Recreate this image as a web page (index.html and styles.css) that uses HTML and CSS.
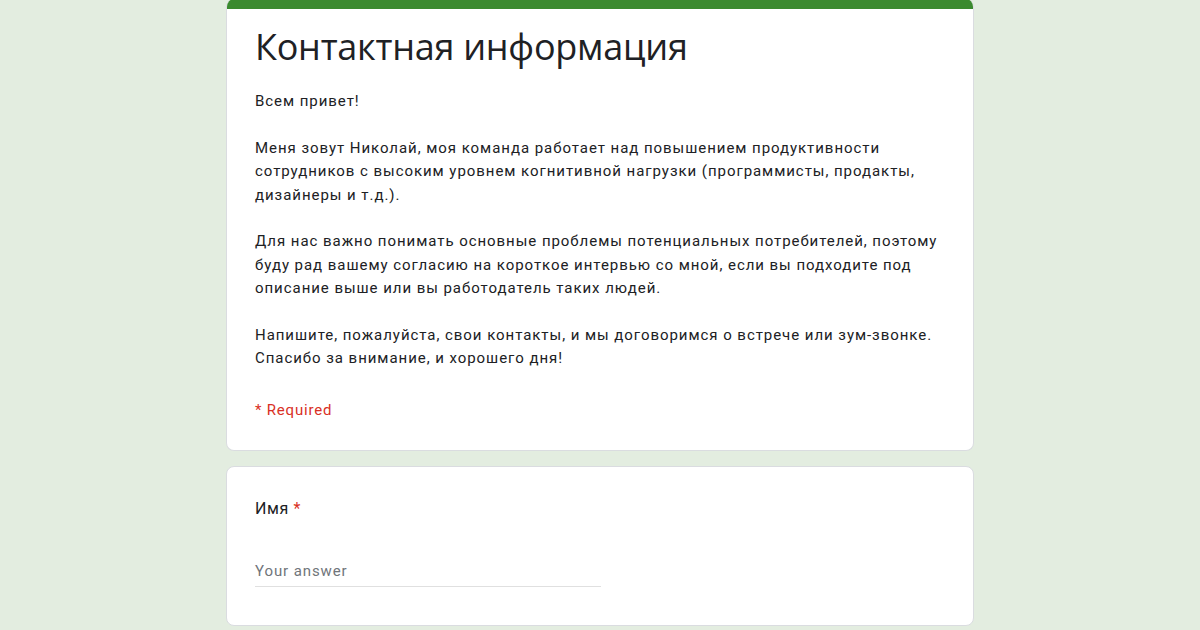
FILE: index.html
```html
<!DOCTYPE html>
<html lang="ru">
<head>
<meta charset="utf-8">
<title>Контактная информация</title>
<link rel="stylesheet" href="styles.css">
</head>
<body>
<div class="form">
  <div class="card header-card">
    <div class="accent"></div>
    <div class="header-body">
      <h1 class="title">Контактная информация</h1>
      <div class="desc">Всем привет!

Меня зовут Николай, моя команда работает над повышением продуктивности сотрудников с высоким уровнем когнитивной нагрузки (программисты, продакты, дизайнеры и т.д.).

Для нас важно понимать основные проблемы потенциальных потребителей, поэтому буду рад вашему согласию на короткое интервью со мной, если вы подходите под описание выше или вы работодатель таких людей.

Напишите, пожалуйста, свои контакты, и мы договоримся о встрече или зум-звонке. Спасибо за внимание, и хорошего дня!</div>
      <div class="required">* Required</div>
    </div>
  </div>
  <div class="card question-card">
    <div class="q-title">Имя <span class="star">*</span></div>
    <div class="answer">Your answer</div>
  </div>
</div>
</body>
</html>
```
FILE: styles.css
```css
html, body {
  margin: 0;
  padding: 0;
}
body {
  background: #e3ede0;
  font-family: Roboto, "Noto Sans", Arial, sans-serif;
  color: #202124;
  width: 1200px;
  height: 630px;
  overflow: hidden;
}
.form {
  width: 748px;
  margin: -1px 0 0 226px;
  display: flex;
  flex-direction: column;
  gap: 15px;
}
.card {
  background: #fff;
  border-radius: 8px;
  border: 1px solid #dadce0;
  box-sizing: border-box;
}
.header-card {
  overflow: hidden;
  border-top: none;
}
.accent {
  height: 10px;
  background: #3b8a2f;
}
.header-body {
  padding: 14px 24px 29px 28px;
}
.title {
  margin: 0;
  font-family: "Open Sans", Roboto, sans-serif;
  font-weight: 400;
  font-size: 36px;
  line-height: 48px;
  color: #202124;
  letter-spacing: -0.25px;
}
.desc {
  margin-top: 19px;
  white-space: pre-wrap;
  font-size: 15px;
  line-height: 23.4px;
  letter-spacing: 0.95px;
  padding-right: 0;
}
.required {
  margin-top: 28px;
  color: #d93025;
  font-size: 15px;
  letter-spacing: 0.8px;
  line-height: 22px;
}
.question-card {
  padding: 30px 24px 36px 28px;
  height: 160px;
}
.q-title {
  font-size: 16px;
  line-height: 24px;
  letter-spacing: 0.6px;
}
.star {
  color: #d93025;
}
.answer {
  margin-top: 40px;
  width: 346px;
  font-size: 15px;
  letter-spacing: 0.9px;
  color: #70757a;
  border-bottom: 1px solid #e0e0e0;
  padding-bottom: 5px;
  line-height: 20px;
}
```
